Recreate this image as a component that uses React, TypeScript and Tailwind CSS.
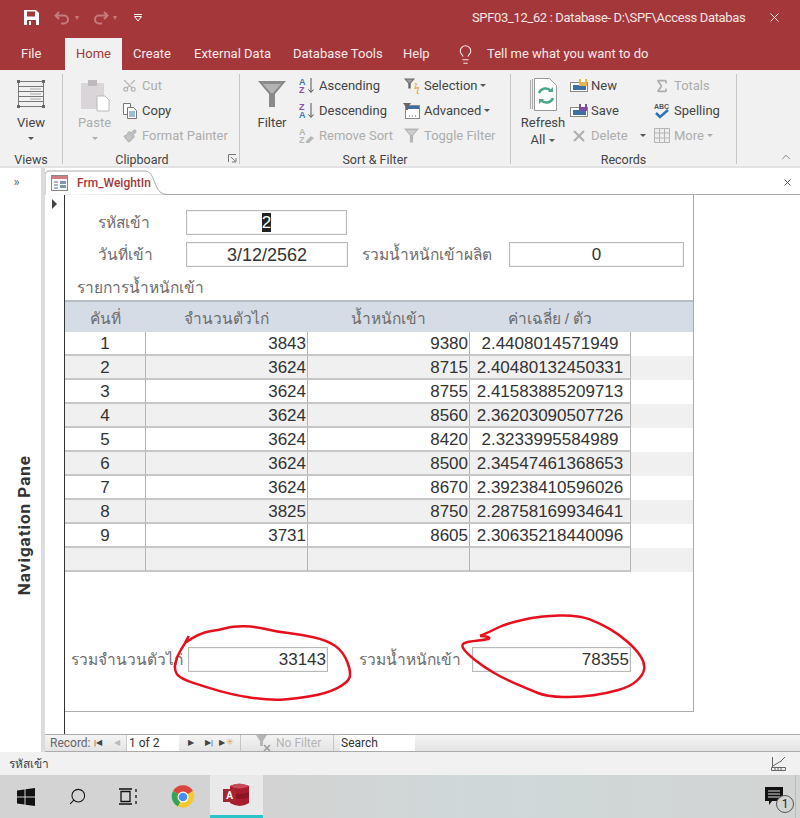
import React from 'react';
import { Scissors, Paintbrush, Sigma, X, Lightbulb, ChevronUp, Search } from 'lucide-react';

// ── Small drawings ─────────────────────────────────────────────
const Caret = ({ className = 'border-t-[#555]' }: { className?: string }) => (
  <span className={`inline-block w-0 h-0 border-x-[3px] border-x-transparent border-t-[3px] ${className}`} />
);

const Funnel = ({ size = 14, fill = '#8a8a8a' }: { size?: number; fill?: string }) => (
  <svg width={size} height={size} viewBox="0 0 28 28">
    <path d="M0 1h28L17 14v13h-6V14z" fill={fill} />
    <path d="M5 4h18l-8 9h-2z" fill="#fff" opacity=".35" />
  </svg>
);

const AzIcon = ({ top, bottom, topColor, botColor, faded }: { top: string; bottom: string; topColor: string; botColor: string; faded?: boolean }) => (
  <svg width="16" height="17" viewBox="0 0 16 17">
    <text x="0" y="7.5" fontSize="9" fontWeight="700" fontFamily="Liberation Sans" fill={topColor}>{top}</text>
    <text x="0" y="16" fontSize="9" fontWeight="700" fontFamily="Liberation Sans" fill={botColor}>{bottom}</text>
    {faded
      ? <path d="M7 14l5-5 3 2-5 5H7z" fill="#b8b8b8" />
      : <path d="M12 1v14M9.5 12.5l2.5 3 2.5-3" stroke="#555" fill="none" />}
  </svg>
);

const SmallForm = ({ accent }: { accent: string }) => (
  <svg width="18" height="14" viewBox="0 0 18 14">
    <rect x=".5" y="3.5" width="17" height="9" fill="#fff" stroke="#888" />
    <rect x="3" y="6" width="13" height="5" fill="#3d6ea5" />
    <rect x="9" y="0" width="8" height="7" fill={accent} />
    <rect x="11" y="0" width="4" height="3" fill="#fff" />
  </svg>
);

function RedCircles() {
  const left = [[556, 128], [600, 98], [660, 90], [700, 78], [770, 80], [830, 95], [900, 103], [980, 120], [1030, 155], [1055, 220], [1040, 250], [980, 280], [880, 298], [800, 300], [700, 285], [620, 262], [540, 235], [522, 210], [530, 170], [556, 128], [566, 108]];
  const right = [[640, 108], [670, 95], [720, 70], [820, 48], [935, 45], [1000, 70], [1060, 105], [1110, 150], [1135, 190], [1130, 225], [1090, 260], [1020, 280], [940, 292], [840, 290], [780, 265], [710, 235], [650, 200], [600, 160], [583, 135], [600, 125], [670, 118], [665, 110], [640, 108]];
  // rounds the hand drawn strokes through the midpoints
  const toPath = (p: number[][]) => {
    let d = `M${p[0][0]} ${p[0][1]}`;
    for (let i = 1; i < p.length - 1; i++) {
      d += ` Q${p[i][0]} ${p[i][1]} ${(p[i][0] + p[i + 1][0]) / 2} ${(p[i][1] + p[i + 1][1]) / 2}`;
    }
    const last = p[p.length - 1];
    return `${d} L${last[0]} ${last[1]}`;
  };
  return (
    <svg className="absolute left-0 top-[600px] pointer-events-none" width="800" height="109" viewBox="0 0 2400 327" style={{ height: 109 }}>
      <path d={toPath(left)} fill="none" stroke="#e60f1e" strokeWidth="7.5" strokeLinejoin="round" />
      <path d={toPath(right.map(c => [c[0] + 800, c[1]]))} fill="none" stroke="#e60f1e" strokeWidth="7.5" strokeLinejoin="round" />
    </svg>
  );
}

// ── Title bar + tabs ───────────────────────────────────────────
function TitleBar() {
  return (
    <div className="h-[35px] flex items-center text-white">
      <svg className="ml-[24px]" width="15" height="15" viewBox="0 0 15 15">
        <path d="M0 0h12l3 3v12H0z" fill="#fff" />
        <rect x="3" y="1.5" width="8" height="5" fill="#a4373a" />
        <rect x="3" y="10" width="9" height="5" fill="#a4373a" />
        <rect x="5" y="11" width="2" height="4" fill="#fff" />
      </svg>
      <svg className="ml-[15px]" width="17" height="14" viewBox="0 0 17 14" fill="none" stroke="#c77a7c" strokeWidth="2"><path d="M5 1L1.5 4.5 5 8M2 4.5h8a4 4 0 010 8H7" /></svg>
      <span className="ml-[4px] text-[#c77a7c] text-[8px]">▾</span>
      <svg className="ml-[13px]" width="17" height="14" viewBox="0 0 17 14" fill="none" stroke="#c77a7c" strokeWidth="2"><path d="M12 1l3.5 3.5L12 8M15 4.500H7a4 4 0 000 8h3" /></svg>
      <span className="ml-[4px] text-[#c77a7c] text-[8px]">▾</span>
      <svg className="ml-[16px]" width="10" height="9" viewBox="0 0 10 9" fill="none" stroke="#fff"><path d="M1 1.5h8M1.5 3.5h7L5 8z" /></svg>
      <div className="ml-[329px] w-[272px] whitespace-nowrap text-[13px] tracking-[-0.35px] text-[#f3e4e4]">SPF03_12_62 : Database- D:\SPF\Access Databas</div>
      <X className="ml-[23px]" size={15} strokeWidth={1.4} />
    </div>
  );
}

function RibbonTabs() {
  return (
    <div className="h-[35px] flex items-end text-[13px] text-[#f6e9e9] whitespace-nowrap">
      <span className="ml-[21px] w-[44px] h-[32px] leading-[32px]">File</span>
      <span className="w-[57px] h-[32px] leading-[32px] bg-[#f1f1f1] text-[#a4373a] text-center">Home</span>
      <span className="ml-[11px] w-[61px] h-[32px] leading-[32px]">Create</span>
      <span className="w-[99px] h-[32px] leading-[32px]">External Data</span>
      <span className="w-[110px] h-[32px] leading-[32px]">Database Tools</span>
      <span className="w-[52px] h-[32px] leading-[32px]">Help</span>
      <span className="w-[32px] h-[32px] flex items-center"><Lightbulb size={21} strokeWidth={1.2} /></span>
      <span className="h-[32px] leading-[32px]">Tell me what you want to do</span>
    </div>
  );
}

// ── Ribbon ─────────────────────────────────────────────────────
function RibbonRow({ icon, label, faded, caret }: { icon: React.ReactNode; label: string; faded?: boolean; caret?: boolean }) {
  return (
    <div className={`h-[25px] flex items-center whitespace-nowrap ${faded ? 'text-[#adadad]' : 'text-[#444]'}`}>
      <span className="w-[19px] flex justify-center shrink-0">{icon}</span>
      <span className="ml-[3px]">{label}</span>
      {caret && <span className="ml-[3px] flex"><Caret className={faded ? 'border-t-[#adadad]' : 'border-t-[#555]'} /></span>}
    </div>
  );
}

function Group({ width, label, children, launcher }: { width: string; label: string; children: React.ReactNode; launcher?: boolean }) {
  return (
    <div className={`${width} h-[90px] flex flex-col border-r border-[#c6c6c6] relative shrink-0`}>
      <div className="h-[81px] flex">{children}</div>
      <div className={`h-[9px] text-center text-[12.5px] leading-[9px] text-[#444] ${launcher ? 'pr-[18px]' : ''}`}>{label}</div>
      {launcher && (
        <svg className="absolute right-[2px] bottom-[1px]" width="9" height="9" viewBox="0 0 9 9" fill="none" stroke="#777"><path d="M.5 8V.5H8M3 3l4.500 4.500M4 8h4V4" /></svg>
      )}
    </div>
  );
}

function Ribbon() {
  return (
    <div className="h-[98px] bg-[#f1f1f1] border-b-2 border-[#e2e2e2] flex text-[13px] pt-[4px]">
      <Group width="w-[63px]" label="Views">
        <div className="w-[62px] flex flex-col items-center pt-[6px] text-[#444]">
          <svg width="28" height="28" viewBox="0 0 28 28" fill="none" stroke="#777">
            <path d="M1.500 1.500h25v25h-25zM1.500 6.500h25M1.500 11.500h25M1.500 16.500h25M1.500 21.500h25" />
            <path d="M13 8h11v2H13zM13 13h11v2H13zM13 18h11v2H13z" fill="#ccc" stroke="none" />
            <path d="M0 0h3v3H0zM25 0h3v3h-3zM0 25h3v3H0zM25 25h3v3h-3z" fill="#666" stroke="none" />
          </svg>
          <span className="mt-[6px] leading-[18px]">View</span>
          <span className="mt-[5px] flex"><Caret /></span>
        </div>
      </Group>
      <Group width="w-[177px]" label="Clipboard" launcher>
        <div className="w-[57px] pl-[6px] flex flex-col items-center pt-[6px] text-[#adadad]">
          <svg width="30" height="32" viewBox="0 0 30 32">
            <rect x="1" y="3" width="23" height="26" fill="#d9d5d8" />
            <rect x="8" y="0" width="9" height="6" fill="#bdb8bb" />
            <path d="M17 16h8l4 4v11H17z" fill="#fff" stroke="#bbb" />
          </svg>
          <span className="mt-[2px] leading-[18px]">Paste</span>
          <span className="mt-[5px] flex"><Caret className="border-t-[#adadad]" /></span>
        </div>
        <div className="-mt-[1px]">
          <RibbonRow faded label="Cut" icon={<Scissors size={15} color="#b5b5b5" className="-rotate-90" />} />
          <RibbonRow label="Copy" icon={
            <svg width="16" height="16" viewBox="0 0 16 16" fill="#fff" stroke="#777">
              <path d="M1.500.5h7v11h-7z" /><path d="M5.500 4.500h6l3 3v8h-9z" />
              <path d="M7 9h6M7 11h6M7 13h6" stroke="#3d7ab5" />
            </svg>} />
          <RibbonRow faded label="Format Painter" icon={<Paintbrush size={14} color="#b5b5b5" fill="#c4c4c4" />} />
        </div>
      </Group>
      <Group width="w-[271px]" label="Sort &amp; Filter">
        <div className="w-[57px] pl-[7px] flex flex-col items-center pt-[6px] text-[#444]">
          <Funnel size={28} />
          <span className="mt-[6px] leading-[18px]">Filter</span>
        </div>
        <div className="w-[105px] -mt-[1px]">
          <RibbonRow label="Ascending" icon={<AzIcon top="A" bottom="Z" topColor="#3d7ab5" botColor="#8a4fb0" />} />
          <RibbonRow label="Descending" icon={<AzIcon top="Z" bottom="A" topColor="#8a4fb0" botColor="#3d7ab5" />} />
          <RibbonRow faded label="Remove Sort" icon={<AzIcon faded top="A" bottom="Z" topColor="#b5b5b5" botColor="#b5b5b5" />} />
        </div>
        <div className="-mt-[1px]">
          <RibbonRow caret label="Selection" icon={
            <span className="relative flex w-[16px] h-[15px]"><Funnel size={11} fill="#666" /><span className="absolute right-0 bottom-0 text-[10px] leading-[10px] text-[#e3a23a]">ϟ</span></span>} />
          <RibbonRow caret label="Advanced" icon={
            <svg width="17" height="16" viewBox="0 0 17 16"><rect x="2.500" y="2.500" width="14" height="13" fill="#fff" stroke="#888" /><rect x="3" y="3" width="13" height="3" fill="#3d6ea5" /><path d="M0 0h8L5 4v3H3V4z" fill="#666" /><path d="M6 13h1M9 13h1M12 13h1" stroke="#555" /></svg>} />
          <RibbonRow faded label="Toggle Filter" icon={<Funnel size={15} fill="#b5b5b5" />} />
        </div>
      </Group>
      <Group width="w-[226px]" label="Records">
        <div className="w-[58px] pl-[6px] flex flex-col items-center pt-[4px] text-[#444]">
          <svg width="27" height="33" viewBox="0 0 27 33">
            <path d="M.5 2v29M2.500 1v30" stroke="#aaa" fill="none" />
            <path d="M4.500.5h15l7 7v25h-22z" fill="#fff" stroke="#999" />
            <path d="M9 15a7 7 0 0112-2M23 20a7 7 0 01-12 2" stroke="#4ca58d" strokeWidth="2.500" fill="none" />
            <path d="M18 14h5v-5zM14 21H9v5z" fill="#4ca58d" />
          </svg>
          <span className="mt-[4px] leading-[16px]">Refresh</span>
          <span className="leading-[18px] flex items-center gap-[4px]">All <Caret /></span>
        </div>
        <div className="w-[83px] -mt-[1px]">
          <RibbonRow label="New" icon={<SmallForm accent="#e7b64d" />} />
          <RibbonRow label="Save" icon={<SmallForm accent="#7a4fa3" />} />
          <div className="relative">
            <RibbonRow faded label="Delete" icon={<X size={18} color="#adadad" strokeWidth={2.5} />} />
            <span className="absolute left-[71px] top-[11px] flex"><Caret /></span>
          </div>
        </div>
        <div className="-mt-[1px]">
          <RibbonRow faded label="Totals" icon={<Sigma size={16} color="#adadad" strokeWidth={2.500} />} />
          <RibbonRow label="Spelling" icon={
            <svg width="16" height="18" viewBox="0 0 16 18"><text x="0" y="6.500" fontSize="7" fontWeight="700" fontFamily="Liberation Sans" fill="#555">ABC</text><path d="M2 11l4 4 8-7" stroke="#2f75b5" strokeWidth="2.500" fill="none" /></svg>} />
          <RibbonRow faded caret label="More" icon={
            <svg width="16" height="15" viewBox="0 0 16 15" fill="#eee" stroke="#b5b5b5"><path d="M.5.5h15v14H.5zM.5 5h15M.5 10h15M5.500.5v14M10.500.5v14" /></svg>} />
        </div>
      </Group>
      <div className="flex-1 flex items-end justify-end pr-[7px] pb-[2px]"><ChevronUp size={14} color="#666" strokeWidth={1.3} /></div>
    </div>
  );
}

// ── Form ───────────────────────────────────────────────────────
const ROWS = [
  ['1', '3843', '9380', '2.4408014571949'],
  ['2', '3624', '8715', '2.40480132450331'],
  ['3', '3624', '8755', '2.41583885209713'],
  ['4', '3624', '8560', '2.36203090507726'],
  ['5', '3624', '8420', '2.3233995584989'],
  ['6', '3624', '8500', '2.34547461368653'],
  ['7', '3624', '8670', '2.39238410596026'],
  ['8', '3825', '8750', '2.28758169934641'],
  ['9', '3731', '8605', '2.30635218440096'],
  ['', '', '', ''],
];

const Cell = ({ children, right, first, last }: { children?: React.ReactNode; right?: boolean; first?: boolean; last?: boolean }) => (
  <div className={`h-[24px] leading-[24px] border-b-2 border-b-[#c6c6c6] ${first ? '' : 'border-l border-l-[#b4b4b4]'} ${last ? 'border-r border-r-[#b4b4b4]' : ''} ${right ? 'text-right pr-[1px]' : 'text-center'}`}>{children}</div>
);

function FormField({ children, width, align = 'text-center' }: { children: React.ReactNode; width: string; align?: string }) {
  return (
    <div className={`${width} h-[25px] border border-[#b9b9b9] shadow-[inset_0_0_0_1px_#f4f4f4] ${align} leading-[24px] text-[#333] shrink-0`}>{children}</div>
  );
}

const Label = ({ className, children }: { className: string; children: React.ReactNode }) => (
  <span className={`${className} text-[15.5px] leading-[25px] whitespace-nowrap text-[#6d6d6d]`}>{children}</span>
);

function WeightForm() {
  return (
    <div className="w-[629px] h-[517px] border-r border-b border-[#ababab] bg-white text-[17px] font-['Liberation_Sans','Noto_Sans',sans-serif] text-[#333] shrink-0">
      <div className="h-[25px] flex items-center mt-[15px] ml-[33px]">
        <Label className="w-[88px]">รหัสเข้า</Label>
        <FormField width="w-[161px]"><span className="bg-[#222] text-white">2</span></FormField>
      </div>
      <div className="h-[25px] flex items-center mt-[7px] ml-[33px]">
        <Label className="w-[88px]">วันที่เข้า</Label>
        <FormField width="w-[162px]"><span className="text-[18px]">3/12/2562</span></FormField>
        <Label className="ml-[14px] w-[147px]">รวมน้ำหนักเข้าผลิต</Label>
        <FormField width="w-[175px]">0</FormField>
      </div>
      <div className="ml-[12px] mt-[7px] h-[26px] flex items-center">
        <Label className="">รายการน้ำหนักเข้า</Label>
      </div>
      <div className="h-[32px] bg-[#d5dce6] border-t-2 border-[#b9bec6] grid grid-cols-[80px_162px_162px_162px] text-center">
        <Label className="leading-[33px]">คันที่</Label>
        <Label className="leading-[33px]">จำนวนตัวไก่</Label>
        <Label className="leading-[33px]">น้ำหนักเข้า</Label>
        <Label className="leading-[33px]">ค่าเฉลี่ย / ตัว</Label>
      </div>
      {ROWS.map((r, i) => (
        <div key={i} className={`grid grid-cols-[80px_162px_162px_162px] h-[24px] ${i % 2 ? 'bg-[#f0f0f0]' : 'bg-white'}`}>
          <Cell first>{r[0]}</Cell>
          <Cell right>{r[1]}</Cell>
          <Cell right>{r[2]}</Cell>
          <Cell last>{r[3]}</Cell>
        </div>
      ))}
      <div className="h-[25px] flex items-center mt-[75px] ml-[6px]">
        <Label className="w-[117px]">รวมจำนวนตัวไก่</Label>
        <FormField width="w-[140px]" align="text-right pr-[1px]">33143</FormField>
        <Label className="ml-[31px] w-[113px]">รวมน้ำหนักเข้า</Label>
        <FormField width="w-[159px]" align="text-right pr-[1px]">78355</FormField>
      </div>
    </div>
  );
}

function RecordNav() {
  return (
    <div className="h-[18px] border-y border-[#ababab] bg-[linear-gradient(#f4f4f4,#e4e4e4)] flex items-center text-[12px] text-[#666] whitespace-nowrap">
      <span className="ml-[5px] w-[44px] shrink-0">Record:</span>
      <span className="w-[20px] shrink-0 text-[#444] text-[8px]">|◀</span>
      <span className="w-[12px] shrink-0 text-[#bbb] text-[8px]">◀</span>
      <span className="w-[53px] shrink-0 h-[16px] bg-white text-[#333] pl-[2px] leading-[16px] border-l border-[#ccc]">1 of 2</span>
      <span className="ml-[9px] w-[17px] shrink-0 text-[#444] text-[8px]">▶</span>
      <span className="w-[14px] shrink-0 text-[#444] text-[8px]">▶|</span>
      <span className="w-[6px] shrink-0 text-[#444] text-[8px]">▶</span>
      <span className="w-[15px] shrink-0 text-[#e3a23a] text-[9px] pl-[1px]">✳</span>
      <div className="w-[94px] shrink-0 h-[16px] border-x border-[#c6c6c6] flex items-center pl-[15px] text-[#b5b5b5]">
        <svg width="16" height="16" viewBox="0 0 16 16" fill="#b5b5b5"><path d="M0 0h11L7 6v5H4V6z" /><path d="M8 10l6 6M14 10l-6 6" stroke="#999" strokeWidth="1.500" /></svg>
        <span className="ml-[4px]">No Filter</span>
      </div>
      <span className="ml-[6px] w-[75px] shrink-0 h-[16px] bg-white text-[#333] leading-[16px] pl-[1px]">Search</span>
    </div>
  );
}

function Workspace() {
  return (
    <div className="h-[584px] flex">
      <div className="w-[45px] shrink-0 bg-white border-r-[4px] border-[#dcdcdc] flex flex-col items-center pl-[7px]">
        <span className="-ml-[15px] mt-[6px] h-[16px] text-[#666] text-[13px] leading-[16px]">»</span>
        <span className="mt-[265px] [writing-mode:vertical-rl] rotate-180 font-bold text-[17px] tracking-[1px] leading-[20px] text-[#333] whitespace-nowrap">Navigation Pane</span>
      </div>
      <div className="flex-1 flex flex-col min-w-0">
        <div className="h-[27px] flex items-end border-b border-[#ababab] relative">
          <div className="relative w-[122px] h-[25px] flex items-center pl-[6px] -mb-[1px]">
            <svg className="absolute inset-0" width="122" height="25" viewBox="0 0 122 25" fill="none">
              <path d="M0 25V5Q0 1 5 1H100Q105 1 108 8L112 18Q115 24 122 24.500" stroke="#ababab" fill="#fff" />
            </svg>
            <svg className="relative" width="17" height="16" viewBox="0 0 17 16">
              <rect x=".5" y=".5" width="16" height="15" fill="#f7f7f7" stroke="#888" />
              <rect x="1" y="1" width="15" height="3" fill="#d07c80" />
              <path d="M3 7h4M3 10h4M3 13h4" stroke="#5878a0" strokeWidth="1.200" />
              <path d="M9 6h6v3H9zM9 10h6v3H9z" fill="#7f94ad" />
            </svg>
            <span className="relative ml-[9px] text-[12px] font-medium text-[#a4373a]">Frm_WeightIn</span>
          </div>
          <X className="absolute right-[7px] top-[9px]" size={11} color="#444" strokeWidth={2} />
        </div>
        <div className="flex-1 flex min-h-0">
          <div className="w-[20px] border-r-[1.5px] border-[#333] shrink-0 pl-[7px] pt-[4px]">
            <span className="block w-0 h-0 border-y-[5px] border-y-transparent border-l-[5px] border-l-[#444]" />
          </div>
          <WeightForm />
        </div>
        <RecordNav />
      </div>
    </div>
  );
}

function StatusBar() {
  return (
    <div className="h-[23px] bg-[#f1f1f1] flex items-center justify-between pl-[9px] pr-[14px] text-[12px] text-[#444]">
      <span>รหัสเข้า</span>
      <svg width="15" height="15" viewBox="0 0 15 15" fill="none" stroke="#666"><path d="M1.500 1v10M1 10.500l10-6M.5 11.500h14v3H.5zM4 12v2M7 12v2M10 12v2M9 6l5-5" /></svg>
    </div>
  );
}

function Taskbar() {
  return (
    <div className="h-[43px] bg-[linear-gradient(90deg,#d3d3d3,#d3d3d3_35%,#cfd8d9_60%,#d2d4d3)] flex items-center relative">
      <svg className="ml-[17px]" width="18" height="18" viewBox="0 0 18 18" fill="#111"><path d="M0 2.500l7.500-1V8.500H0zM8.500 1.300L18 0v8.500H8.500zM0 9.500h7.500v7L0 15.500zM8.500 9.500H18V18l-9.500-1.300z" /></svg>
      <Search className="ml-[33px] -scale-x-100" size={19} color="#111" strokeWidth={1.3} />
      <svg className="ml-[32px]" width="18" height="17" viewBox="0 0 18 17" fill="none" stroke="#111" strokeWidth="1.300"><path d="M2 3.500h9v10H2zM0 1h13M0 16h13M17 1v3M17 7v3M17 13v3" /></svg>
      <svg className="ml-[34px]" width="24" height="24" viewBox="0 0 24 24">
        <path d="M12 12L2 6a11.500 11.500 0 0120 0z" fill="#d9473c" />
        <path d="M12 12l-5 9.500A11.500 11.500 0 012 6z" fill="#36a354" />
        <path d="M12 12l10-6a11.500 11.500 0 01-15 15.500z" fill="#f5c92e" />
        <circle cx="12" cy="12" r="5.500" fill="#fff" />
        <circle cx="12" cy="12" r="4.300" fill="#4a8df0" />
      </svg>
      <div className="ml-[15px] w-[53px] h-[43px] bg-[#e9e9e9] border-b-[3px] border-[#2cc4c8] flex items-center justify-center">
        <div className="relative w-[27px] h-[24px]">
          <svg width="27" height="24" viewBox="0 0 27 24">
            <path d="M7 3q8-4 19 0v17q-9 6-19 0z" fill="#a81c2e" />
            <path d="M7 3q9 5 19 0-10-5-19 0z" fill="#c9485a" />
            <path d="M7 9q9 4 19 0v5q-9 4-19 0z" fill="#8c1524" />
          </svg>
          <span className="absolute left-0 top-[6px] w-[13px] h-[13px] bg-[#a4262c] text-white text-[10px] leading-[13px] font-bold text-center">A</span>
        </div>
      </div>
      <div className="absolute right-[4px] top-0 h-[43px] w-[40px] border-r border-[#bbb]">
        <svg className="absolute left-[9px] top-[12px]" width="19" height="18" viewBox="0 0 19 18"><path d="M0 0h18v14H7l-3 4v-4H0z" fill="#111" /><path d="M3 4h12M3 7h12M3 10h12" stroke="#ddd" /></svg>
        <span className="absolute left-[20px] top-[20px] w-[18px] h-[18px] rounded-full border border-[#555] bg-[#d2d4d3] text-[12px] leading-[16px] text-center text-[#222]">1</span>
      </div>
    </div>
  );
}

export default function App() {
  return (
    <div className="relative w-[800px] h-[818px] overflow-hidden bg-white font-['Roboto','Noto_Sans',sans-serif]">
      <div className="bg-[#a4373a]">
        <TitleBar />
        <RibbonTabs />
      </div>
      <Ribbon />
      <Workspace />
      <StatusBar />
      <Taskbar />
      <RedCircles />
    </div>
  );
}
